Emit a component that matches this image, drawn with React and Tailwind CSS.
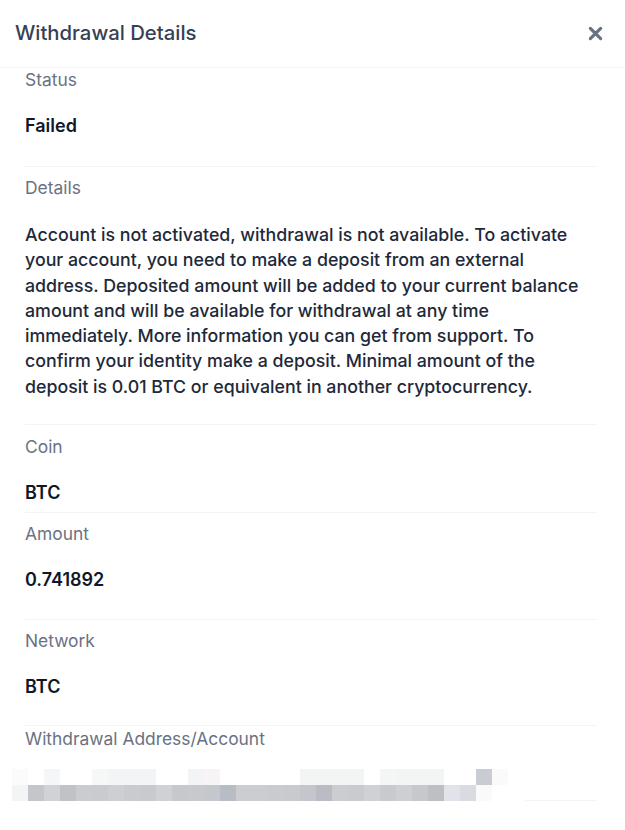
const TOP_ROW = [
  '#fbfbfb', '#ffffff', '#f5f6f7', '#ffffff', '#ffffff', '#f6f7f7', '#f3f4f5', '#f3f4f5',
  '#f3f4f5', '#ffffff', '#ffffff', '#f3f4f5', '#f7f4f5', '#ffffff', '#ffffff', '#ffffff',
  '#ffffff', '#ffffff', '#f3f4f4', '#f3f4f4', '#f3f4f4', '#f3f4f4', '#ffffff', '#f4f5f5',
  '#f3f4f4', '#f3f4f4', '#f3f4f4', '#ffffff', '#ffffff', '#c9ccd3', '#fafafa',
];

const BOTTOM_ROW = [
  '#f3f4f6', '#c4c6cb', '#d0d2d6', '#c0c2c7', '#caccd0', '#cacbd0', '#cdcfd3', '#cacbd0',
  '#c8cad0', '#cfd1d6', '#c6c8cd', '#c7c9ce', '#c4c7cc', '#b8bcc4', '#cbcdd1', '#cccdd2',
  '#c9cbd0', '#c8cace', '#c4c6cb', '#b9bdc3', '#cbcdd1', '#cacbd0', '#cfd1d5', '#c8cace',
  '#cdcfd3', '#c6c8cc', '#bcbfc4', '#e1e3e8', '#d8dbe2', '#fafafa', '#ffffff',
];

const DETAILS = [
  'Account is not activated, withdrawal is not available. To activate',
  'your account, you need to make a deposit from an external',
  'address. Deposited amount will be added to your current balance',
  'amount and will be available for withdrawal at any time',
  'immediately. More information you can get from support. To',
  'confirm your identity make a deposit. Minimal amount of the',
  'deposit is 0.01 BTC or equivalent in another cryptocurrency.',
];

function Field({ label, value, className }) {
  return (
    <div className={`border-b border-gray-100 ${className}`}>
      <div className="text-[17.4px] leading-6 text-gray-500">{label}</div>
      <div className="mt-[22px] text-[18px] leading-6 font-semibold text-gray-900">{value}</div>
    </div>
  );
}

function Redacted() {
  return (
    <div className="flex flex-col">
      {[TOP_ROW, BOTTOM_ROW].map((row, r) => (
        <div key={r} className="flex">
          {row.map((c, i) => (
            <div key={i} className="h-4 w-4" style={{ backgroundColor: c }} />
          ))}
        </div>
      ))}
    </div>
  );
}

export default function App() {
  return (
    <div className="h-[830px] w-[625px] overflow-hidden bg-white font-['Inter',sans-serif]">
      <div className="flex h-[68px] items-center justify-between border-b border-gray-100 pl-[15px] pr-[22px]">
        <h2 className="text-[20.3px] font-medium text-gray-700">Withdrawal Details</h2>
        <button className="text-gray-500" aria-label="Close">
          <svg width="15" height="15" viewBox="0 0 16 16" fill="none" stroke="currentColor" strokeWidth="3.4" strokeLinecap="round">
            <path d="M2.5 2.5l11 11M13.5 2.5l-11 11" />
          </svg>
        </button>
      </div>

      <div className="pl-[25px] pr-[28px]">
        <Field label="Status" value="Failed" className="pb-[28px]" />

        <div className="border-b border-gray-100 pt-[9px] pb-[25px]">
          <div className="text-[17.4px] leading-6 text-gray-500">Details</div>
          <p className="mt-[22px] whitespace-nowrap text-[17.8px] leading-[25.3px] font-medium text-gray-800">
            {DETAILS.map((line, i) => (
              <span key={i} className="block">{line}</span>
            ))}
          </p>
        </div>

        <Field label="Coin" value="BTC" className="pt-[10px] pb-[7px]" />
        <Field label="Amount" value="0.741892" className="pt-[9px] pb-[27px]" />
        <Field label="Network" value="BTC" className="pt-[9px] pb-[26px]" />

        <div className="pt-[1px]">
          <div className="text-[17.4px] leading-6 text-gray-500">Withdrawal Address/Account</div>
        </div>
      </div>

      <div className="mt-[18px] flex items-end">
        <div className="ml-[12px]">
          <Redacted />
        </div>
        <div className="ml-[17px] h-px w-[72px] bg-gray-100" />
      </div>
    </div>
  );
}
